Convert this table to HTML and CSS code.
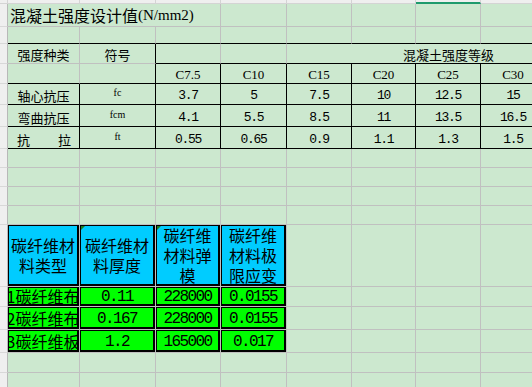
FILE: index.html
```html
<!DOCTYPE html>
<html lang="zh">
<head>
<meta charset="utf-8">
<title>混凝土强度设计值</title>
<link rel="stylesheet" href="styles.css">
</head>
<body>
<div class="sheet">
  <!-- column header strip -->
  <div class="corner"></div>
  <div class="ch"></div><div class="ch"></div><div class="ch"></div><div class="ch"></div>
  <div class="ch"></div><div class="ch"></div><div class="ch sel"></div><div class="ch"></div>

  <!-- row 1 -->
  <div class="rh"></div>
  <div class="c title span3">混凝土强度设计值<span class="lat">(N/mm2)</span></div>
  <div class="c"></div><div class="c"></div><div class="c"></div><div class="c"></div><div class="c"></div>

  <!-- row 2 -->
  <div class="rh"></div>
  <div class="c bb"></div><div class="c bb"></div><div class="c bb"></div><div class="c bb"></div>
  <div class="c bb"></div><div class="c bb"></div><div class="c bb"></div><div class="c bb"></div>

  <!-- row 3 -->
  <div class="rh"></div>
  <div class="c">强度种类</div>
  <div class="c br">符号</div>
  <div class="c bb"></div>
  <div class="c bb"></div>
  <div class="c bb grade span4">混凝土强度等级</div>

  <!-- row 4 -->
  <div class="rh"></div>
  <div class="c bb"></div>
  <div class="c bb br"></div>
  <div class="c bb br lat">C7.5</div>
  <div class="c bb br lat">C10</div>
  <div class="c bb br lat">C15</div>
  <div class="c bb br lat">C20</div>
  <div class="c bb br lat">C25</div>
  <div class="c bb br lat">C30</div>

  <!-- row 5 -->
  <div class="rh"></div>
  <div class="c bb br">轴心抗压</div>
  <div class="c bb br sym">fc</div>
  <div class="c bb br num">3.7</div>
  <div class="c bb br num">5</div>
  <div class="c bb br num">7.5</div>
  <div class="c bb br num">10</div>
  <div class="c bb br num">12.5</div>
  <div class="c bb br num">15</div>

  <!-- row 6 -->
  <div class="rh"></div>
  <div class="c bb br">弯曲抗压</div>
  <div class="c bb br sym">fcm</div>
  <div class="c bb br num">4.1</div>
  <div class="c bb br num">5.5</div>
  <div class="c bb br num">8.5</div>
  <div class="c bb br num">11</div>
  <div class="c bb br num">13.5</div>
  <div class="c bb br num">16.5</div>

  <!-- row 7 -->
  <div class="rh"></div>
  <div class="c bb br spread"><span>抗</span><span>拉</span></div>
  <div class="c bb br sym">ft</div>
  <div class="c bb br num">0.55</div>
  <div class="c bb br num">0.65</div>
  <div class="c bb br num">0.9</div>
  <div class="c bb br num">1.1</div>
  <div class="c bb br num">1.3</div>
  <div class="c bb br num">1.5</div>

  <!-- rows 8-11 -->
  <div class="rh"></div>
  <div class="c"></div><div class="c"></div><div class="c"></div><div class="c"></div>
  <div class="c"></div><div class="c"></div><div class="c"></div><div class="c"></div>
  <div class="rh"></div>
  <div class="c"></div><div class="c"></div><div class="c"></div><div class="c"></div>
  <div class="c"></div><div class="c"></div><div class="c"></div><div class="c"></div>
  <div class="rh"></div>
  <div class="c"></div><div class="c"></div><div class="c"></div><div class="c"></div>
  <div class="c"></div><div class="c"></div><div class="c"></div><div class="c"></div>
  <div class="rh"></div>
  <div class="c"></div><div class="c"></div><div class="c"></div><div class="c"></div>
  <div class="c"></div><div class="c"></div><div class="c"></div><div class="c"></div>

  <!-- row 12: carbon fibre header -->
  <div class="rh"></div>
  <div class="c tb"><div class="box cyan">碳纤维材<br>料类型</div></div>
  <div class="c tb"><div class="box cyan flag">碳纤维材<br>料厚度</div></div>
  <div class="c tb"><div class="box cyan flag">碳纤维<br>材料弹<br>模</div></div>
  <div class="c tb"><div class="box cyan">碳纤维<br>材料极<br>限应变</div></div>
  <div class="c"></div><div class="c"></div><div class="c"></div><div class="c"></div>

  <!-- row 13 -->
  <div class="rh"></div>
  <div class="c tb"><div class="box green">1碳纤维布</div></div>
  <div class="c tb"><div class="box green mono">0.11</div></div>
  <div class="c tb"><div class="box green mono">228000</div></div>
  <div class="c tb"><div class="box green mono">0.0155</div></div>
  <div class="c"></div><div class="c"></div><div class="c"></div><div class="c"></div>

  <!-- row 14 -->
  <div class="rh"></div>
  <div class="c tb"><div class="box green">2碳纤维布</div></div>
  <div class="c tb"><div class="box green mono">0.167</div></div>
  <div class="c tb"><div class="box green mono">228000</div></div>
  <div class="c tb"><div class="box green mono">0.0155</div></div>
  <div class="c"></div><div class="c"></div><div class="c"></div><div class="c"></div>

  <!-- row 15 -->
  <div class="rh"></div>
  <div class="c tb"><div class="box green">3碳纤维板</div></div>
  <div class="c tb"><div class="box green mono">1.2</div></div>
  <div class="c tb"><div class="box green mono">165000</div></div>
  <div class="c tb"><div class="box green mono">0.017</div></div>
  <div class="c"></div><div class="c"></div><div class="c"></div><div class="c"></div>

  <!-- rows 16-17 -->
  <div class="rh"></div>
  <div class="c"></div><div class="c"></div><div class="c"></div><div class="c"></div>
  <div class="c"></div><div class="c"></div><div class="c"></div><div class="c"></div>
  <div class="rh"></div>
  <div class="c"></div><div class="c"></div><div class="c"></div><div class="c"></div>
  <div class="c"></div><div class="c"></div><div class="c"></div><div class="c"></div>
</div>
</body>
</html>
```

FILE: styles.css
```css
:root {
  --bg: #cce8cf;
  --grid: #c0c0c0;
  --strip: #efefef;
  --cjk: "Noto Sans CJK SC", "Noto Sans CJK JP", sans-serif;
  --serif: "Liberation Serif", "Times New Roman", serif;
  --mono: "Liberation Mono", "DejaVu Sans Mono", monospace;
}

* { box-sizing: border-box; }

html, body {
  margin: 0;
  width: 532px;
  height: 387px;
  overflow: hidden;
  background: var(--bg);
}

.sheet {
  display: grid;
  grid-template-columns: 8px 72px 76px 65px 66px 65px 64px 65px 65px;
  grid-template-rows: 4px 23px 17px 20px 20px 21px 22px 22px 19px 19px 19px 19px 62px 20px 23px 23px 20px 19px;
  font-family: var(--cjk);
  font-size: 13px;
  color: #000;
}

.corner, .ch {
  background: var(--strip);
  border-right: 1px solid #d4d4d4;
  border-bottom: 1px solid #d4d4d4;
}
.ch.sel { border-bottom: 2px solid #1e9a6c; }

.rh {
  background: var(--strip);
  border-right: 1px solid #b8b8b8;
  border-bottom: 1px solid #d8d8d8;
}

.c {
  display: flex;
  align-items: flex-end;
  justify-content: center;
  padding-bottom: 1px;
  line-height: 15px;
  white-space: nowrap;
  overflow: hidden;
  border-right: 1px solid var(--grid);
  border-bottom: 1px solid var(--grid);
}

.bb { border-bottom-color: #000; }
.br { border-right-color: #000; }

.span3 { grid-column: span 3; }
.span4 { grid-column: span 4; }

.title {
  justify-content: flex-start;
  padding-left: 2px;
  font-size: 16px;
  line-height: 18px;
  padding-bottom: 2px;
}
.title .lat { font-size: 15px; }

.lat { font-family: var(--serif); }

.grade {
  justify-content: flex-start;
  padding-left: 116px;
}

.sym {
  font-family: var(--serif);
  font-size: 10px;
  padding-bottom: 4px;
}

.num {
  font-family: var(--mono);
  font-size: 13px;
  letter-spacing: -1.3px;
}

.spread {
  justify-content: space-between;
  padding: 0 8px 1px 9px;
}

/* carbon fibre table */
.tb {
  padding: 0;
  align-items: stretch;
  justify-content: stretch;
}

.box {
  flex: 1;
  display: flex;
  align-items: center;
  justify-content: center;
  text-align: center;
  border: 1px solid #000;
  border-right-width: 2px;
  border-bottom-width: 2px;
  font-size: 16px;
  line-height: 20px;
  overflow: hidden;
  position: relative;
}

.cyan { background: #00ccff; }
.green { background: #00ff00; }

.mono {
  font-family: var(--mono);
  letter-spacing: -1.6px;
  padding-top: 2px;
}

.flag::before {
  content: "";
  position: absolute;
  left: 0;
  top: 0;
  border-top: 4px solid #1f7a1f;
  border-right: 4px solid transparent;
}
```
